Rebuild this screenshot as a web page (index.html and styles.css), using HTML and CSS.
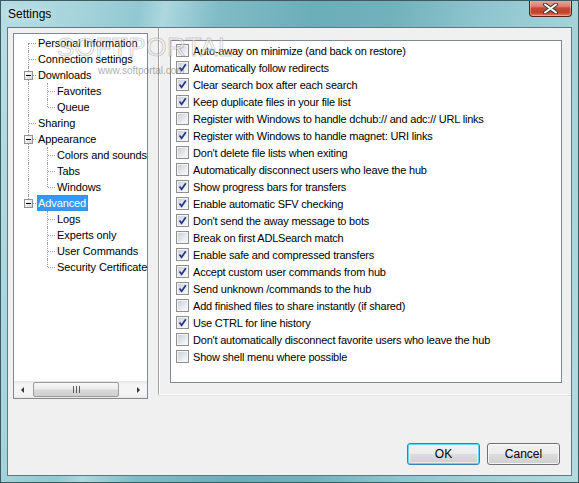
FILE: index.html
```html
<!DOCTYPE html>
<html lang="en">
<head>
    <meta charset="UTF-8">
    <title>Settings</title>
    <link rel="stylesheet" href="styles.css">
</head>
<body>

<div class="window">

    <div class="titlebar">
        <span class="caption">Settings</span>
        <span class="close">
            <svg width="17" height="11" viewBox="0 0 17 11">
                <path d="M3 1.5 L14 9.5 M14 1.5 L3 9.5" stroke="#3b3b3b" stroke-width="4" stroke-linecap="round"/>
                <path d="M3 1.5 L14 9.5 M14 1.5 L3 9.5" stroke="#ffffff" stroke-width="2" stroke-linecap="round"/>
            </svg>
        </span>
    </div>

    <div class="client">

        <div class="main">

            <div class="tree">
                <div class="rows">
                    <div class="node"><span class="col first"></span><span class="label">Personal Information</span></div>
                    <div class="node"><span class="col tee"></span><span class="label">Connection settings</span></div>
                    <div class="node"><span class="col tee"><i class="exp"></i></span><span class="label">Downloads</span></div>
                    <div class="node"><span class="col pipe"></span><span class="col tee"></span><span class="label">Favorites</span></div>
                    <div class="node"><span class="col pipe"></span><span class="col ell"></span><span class="label">Queue</span></div>
                    <div class="node"><span class="col tee"></span><span class="label">Sharing</span></div>
                    <div class="node"><span class="col tee"><i class="exp"></i></span><span class="label">Appearance</span></div>
                    <div class="node"><span class="col pipe"></span><span class="col tee"></span><span class="label">Colors and sounds</span></div>
                    <div class="node"><span class="col pipe"></span><span class="col tee"></span><span class="label">Tabs</span></div>
                    <div class="node"><span class="col pipe"></span><span class="col ell"></span><span class="label">Windows</span></div>
                    <div class="node"><span class="col ell"><i class="exp"></i></span><span class="label selected">Advanced</span></div>
                    <div class="node"><span class="col"></span><span class="col tee"></span><span class="label">Logs</span></div>
                    <div class="node"><span class="col"></span><span class="col tee"></span><span class="label">Experts only</span></div>
                    <div class="node"><span class="col"></span><span class="col tee"></span><span class="label">User Commands</span></div>
                    <div class="node"><span class="col"></span><span class="col ell"></span><span class="label">Security Certificates</span></div>
                </div>
                <div class="hscroll">
                    <span class="arrow"><i class="tri-left"></i></span>
                    <span class="track">
                        <span class="thumb"><i class="grip"></i></span>
                    </span>
                    <span class="arrow"><i class="tri-right"></i></span>
                </div>
            </div>

            <div class="panel">
                <div class="list">
                    <div class="opt"><span class="box"></span>Auto-away on minimize (and back on restore)</div>
                    <div class="opt"><span class="box on"></span>Automatically follow redirects</div>
                    <div class="opt"><span class="box on"></span>Clear search box after each search</div>
                    <div class="opt"><span class="box on"></span>Keep duplicate files in your file list</div>
                    <div class="opt"><span class="box"></span>Register with Windows to handle dchub:// and adc:// URL links</div>
                    <div class="opt"><span class="box on"></span>Register with Windows to handle magnet: URI links</div>
                    <div class="opt"><span class="box"></span>Don't delete file lists when exiting</div>
                    <div class="opt"><span class="box"></span>Automatically disconnect users who leave the hub</div>
                    <div class="opt"><span class="box on"></span>Show progress bars for transfers</div>
                    <div class="opt"><span class="box on"></span>Enable automatic SFV checking</div>
                    <div class="opt"><span class="box on"></span>Don't send the away message to bots</div>
                    <div class="opt"><span class="box"></span>Break on first ADLSearch match</div>
                    <div class="opt"><span class="box on"></span>Enable safe and compressed transfers</div>
                    <div class="opt"><span class="box on"></span>Accept custom user commands from hub</div>
                    <div class="opt"><span class="box on"></span>Send unknown /commands to the hub</div>
                    <div class="opt"><span class="box"></span>Add finished files to share instantly (if shared)</div>
                    <div class="opt"><span class="box on"></span>Use CTRL for line history</div>
                    <div class="opt"><span class="box"></span>Don't automatically disconnect favorite users who leave the hub</div>
                    <div class="opt"><span class="box"></span>Show shell menu where possible</div>
                </div>
            </div>

        </div>

        <div class="buttons">
            <span class="btn default">OK</span>
            <span class="btn">Cancel</span>
        </div>

    </div>

    <div class="mark">SOFTPORTAL</div>
    <div class="mark-url">www.softportal.com</div>

</div>

</body>
</html>
```

FILE: styles.css
```css
body {
    margin:     0;
    font-family: "Liberation Sans", Arial, sans-serif;
    font-size:  11px;
    color:      #000;
}

.window {
    position:   relative;
    width:      579px;
    height:     483px;
    box-sizing: border-box;
    border:     1px solid #3d5a60;
    display:    flex;
    flex-direction: column;
    overflow:   hidden;
    background: linear-gradient(100deg, #b7dee4 0%, #a5d4db 12%, #92c8d1 21%, #acd8de 25%, #80bcc7 33%, #6badb9 48%, #72b2bd 60%, #8cc4cd 72%, #a3d1d8 86%, #b4dbe1 100%);
}

/* title bar */
.titlebar {
    height:     26px;
    flex:       none;
    display:    flex;
    align-items: flex-start;
    padding-left: 7px;
}
.caption {
    margin-top: 5px;
    font-size:  12px;
    line-height: 16px;
    text-shadow: 0 0 6px rgba(255,255,255,0.9);
}
.close {
    margin-left: auto;
    margin-right: 6px;
    margin-top: -1px;
    width:      43px;
    height:     17px;
    box-sizing: border-box;
    border:     1px solid #5b2019;
    border-top: none;
    border-radius: 0 0 4px 4px;
    display:    flex;
    align-items: center;
    justify-content: center;
    background: linear-gradient(#e9aca1 0%, #d8806f 40%, #c24a35 50%, #c3432c 78%, #e3805f 100%);
    box-shadow: inset 0 0 0 1px rgba(255,210,200,0.45);
}

/* dialog body */
.client {
    flex:       none;
    margin:     0 6px 6px 6px;
    height:     449px;
    box-sizing: border-box;
    border:     1px solid #5f7b81;
    background: #f0f0f0;
    display:    flex;
    flex-direction: column;
}
.main {
    display:    flex;
    align-items: flex-start;
}

/* tree view */
.tree {
    margin:     5px 0 0 5px;
    width:      135px;
    height:     366px;
    box-sizing: border-box;
    border:     1px solid #828790;
    background: #fff;
    display:    flex;
    flex-direction: column;
    overflow:   hidden;
}
.rows {
    flex:       1;
    padding:    1px 0 0 4px;
    overflow:   hidden;
    letter-spacing: -0.1px;
}
.node {
    display:    flex;
    height:     16px;
    line-height: 16px;
    white-space: nowrap;
}
.col {
    position:   relative;
    flex:       none;
    width:      19px;
    height:     16px;
}
.col.pipe::before,
.col.tee::before,
.col.ell::before,
.col.first::before {
    content:    '';
    position:   absolute;
    left:       10px;
    top:        0;
    bottom:     0;
    border-left: 1px dotted #a0a0a0;
}
.col.ell::before   { bottom: 8px; }
.col.first::before { top: 8px; }
.col.tee::after,
.col.ell::after,
.col.first::after {
    content:    '';
    position:   absolute;
    left:       11px;
    right:      1px;
    top:        8px;
    border-top: 1px dotted #a0a0a0;
}
.exp { /* the [-] box */
    position:   absolute;
    left:       6px;
    top:        4px;
    width:      9px;
    height:     9px;
    box-sizing: border-box;
    border:     1px solid #919191;
    background: linear-gradient(135deg, #ffffff, #d8d8d8);
    z-index:    1;
}
.exp::after {
    content:    '';
    position:   absolute;
    left:       1px;
    right:      1px;
    top:        3px;
    height:     1px;
    background: #000;
}
.label {
    padding:    0 1px;
}
.label.selected {
    background: #3399ff;
    color:      #fff;
    outline:    1px dotted #c8651f;
    outline-offset: -1px;
    padding:    0 2px 0 1px;
}

/* horizontal scroll bar */
.hscroll {
    flex:       none;
    height:     17px;
    display:    flex;
    background: linear-gradient(#e6e6e6, #f4f4f4 20%, #f4f4f4 80%, #e9e9e9);
}
.arrow {
    width:      17px;
    display:    flex;
    align-items: center;
    justify-content: center;
}
.tri-left {
    border-top: 3px solid transparent;
    border-bottom: 3px solid transparent;
    border-right: 3px solid #333;
}
.tri-right {
    border-top: 3px solid transparent;
    border-bottom: 3px solid transparent;
    border-left: 3px solid #333;
}
.track {
    flex:       1;
    padding:    1px 0 1px 2px;
    display:    flex;
}
.thumb {
    width:      86px;
    box-sizing: border-box;
    border:     1px solid #9a9a9a;
    border-radius: 2px;
    background: linear-gradient(#f7f7f7, #ececec 45%, #d9d9d9 55%, #cfcfcf);
    display:    flex;
    align-items: center;
    justify-content: center;
}
.grip {
    width:      7px;
    height:     7px;
    background: repeating-linear-gradient(90deg, #5a5a5a 0 1px, transparent 1px 3px);
}

/* option panel */
.panel {
    flex:       1;
    height:     367px;
    box-sizing: border-box;
    margin-left: 10px;
    border-left: 1px solid #a0a0a0;
    border-bottom: 1px solid #fff;
    box-shadow: inset 1px 0 #fff, 0 1px #e2e2e2;
}
.list {
    margin:     12px 0 0 11px;
    width:      392px;
    height:     343px;
    box-sizing: border-box;
    border:     1px solid #828790;
    background: #fff;
    padding:    1px 0 0 5px;
    letter-spacing: -0.2px;
}
.opt {
    display:    flex;
    align-items: center;
    height:     17px;
    white-space: nowrap;
}
.box {
    flex:       none;
    width:      13px;
    height:     13px;
    box-sizing: border-box;
    margin-right: 4px;
    border:     1px solid #8f8f8f;
    background: linear-gradient(135deg, #c6cbd1, #eef0f2 70%, #f7f7f7);
    box-shadow: inset 0 0 0 1px #f4f4f4;
}
.box.on {
    background:
        url("data:image/svg+xml,%3Csvg xmlns='http://www.w3.org/2000/svg' width='11' height='11'%3E%3Cpath d='M2.5 5.5 L4.6 8.2 L8.8 2.2' fill='none' stroke='%2321378c' stroke-width='1.7'/%3E%3C/svg%3E") center / 11px 11px no-repeat,
        linear-gradient(135deg, #c6cbd1, #eef0f2 70%, #f7f7f7);
}

/* OK / Cancel */
.buttons {
    margin-top: 44px;
    padding-right: 11px;
    display:    flex;
    justify-content: flex-end;
    gap:        7px;
}
.btn {
    width:      73px;
    height:     22px;
    box-sizing: border-box;
    border:     1px solid #707070;
    border-radius: 3px;
    display:    flex;
    align-items: center;
    justify-content: center;
    font-size:  12px;
    background: linear-gradient(#f2f2f2 0%, #ebebeb 50%, #dddddd 50%, #cfcfcf 100%);
    box-shadow: inset 0 0 0 1px rgba(255,255,255,0.75);
}
.btn.default {
    border-color: #3c7fb1;
    box-shadow: inset 0 0 0 1px #5fd6f6, inset 0 0 0 2px rgba(255,255,255,0.5);
}

/* the site watermark */
.mark {
    position:   absolute;
    left:       56px;
    top:        33px;
    font-size:  26px;
    line-height: 26px;
    letter-spacing: 0.5px;
    color:      rgba(255,255,255,0.45);
    -webkit-text-stroke: 1px rgba(120,120,120,0.35);
    pointer-events: none;
}
.mark-url {
    position:   absolute;
    left:       97px;
    top:        64px;
    font-size:  10px;
    line-height: 12px;
    color:      rgba(90,90,90,0.5);
    pointer-events: none;
}
```
